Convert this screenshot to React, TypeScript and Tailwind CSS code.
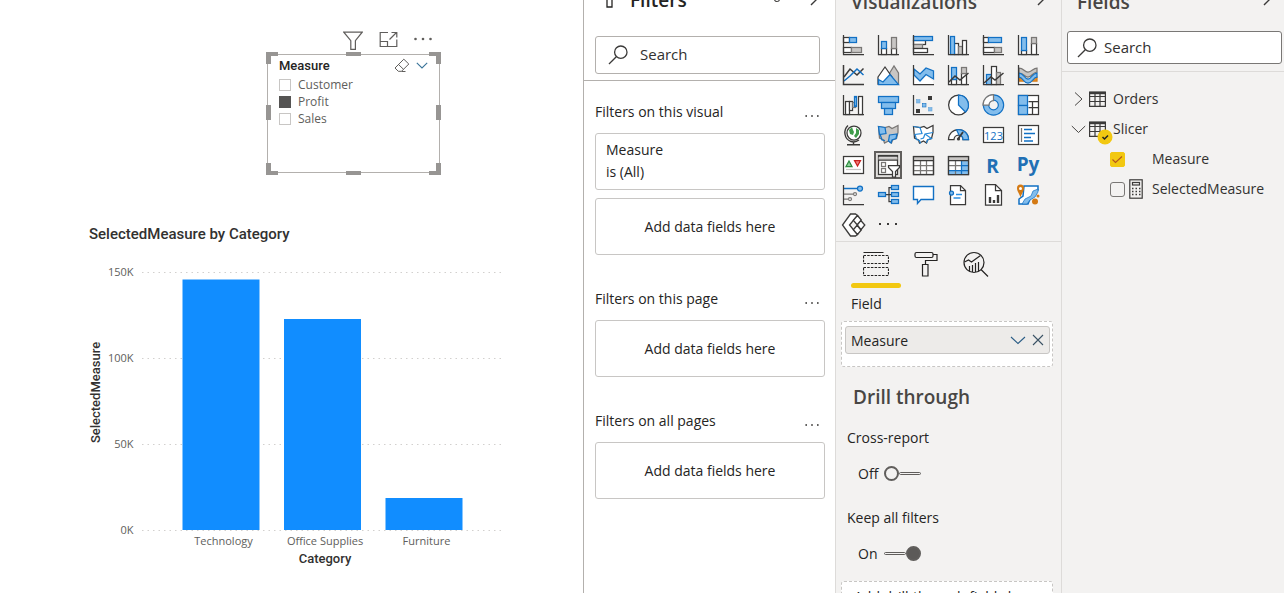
import type { ReactNode } from "react";

const INK = "#3b3a39";
const BLUE = "#1170c4";
const SKY = "#83bdec";
const GREY = "#c8c6c4";
const MID = "#797775";

/* ---------- shared glyphs ---------- */

function SearchGlyph() {
  return (
    <svg viewBox="0 0 20 20" className="h-5 w-5 shrink-0" fill="none" stroke="#3b3a39" strokeWidth="1.3">
      <circle cx="12.8" cy="7.2" r="6.2" />
      <path d="M8.3 11.7 1 19" />
    </svg>
  );
}

function PaneChevron() {
  return (
    <svg viewBox="0 0 9 16" className="h-4 w-[9px]" fill="none" stroke="#3b3a39" strokeWidth="1.4">
      <path d="m1 1 7 7-7 7" />
    </svg>
  );
}

function Dots({ className }: { className: string }) {
  return (
    <svg viewBox="0 0 14 4" className={className} fill="#3b3a39">
      <rect x="0.4" y="1.2" width="1.6" height="1.6" />
      <rect x="6.2" y="1.2" width="1.6" height="1.6" />
      <rect x="12" y="1.2" width="1.6" height="1.6" />
    </svg>
  );
}

function SearchBox({ id, className }: { id: string; className: string }) {
  return (
    <label htmlFor={id} className={className}>
      <SearchGlyph />
      <input
        id={id}
        type="text"
        placeholder="Search"
        className="w-full min-w-0 bg-transparent text-[15px] text-[#252423] outline-none placeholder:text-[#323130] placeholder:opacity-100"
      />
    </label>
  );
}

/* ---------- report canvas ---------- */

const handles = [
  "left-0 top-0 h-3 w-3 border-l-[5px] border-t-[4px]",
  "right-0 top-0 h-3 w-3 border-r-[5px] border-t-[4px]",
  "left-0 bottom-0 h-3 w-3 border-l-[5px] border-b-[4px]",
  "right-0 bottom-0 h-3 w-3 border-r-[5px] border-b-[4px]",
  "left-20 top-0 h-1 w-[15px] border-t-[4px]",
  "left-20 bottom-0 h-1 w-[15px] border-t-[4px]",
  "left-0 top-[53px] h-[15px] w-[5px] border-l-[5px]",
  "right-0 top-[53px] h-[15px] w-[5px] border-l-[5px]",
];

function Slicer() {
  const items = [
    { name: "Customer", on: false },
    { name: "Profit", on: true },
    { name: "Sales", on: false },
  ];
  return (
    <section className="ml-[266px] w-[175px] pt-[31px]">
      <div className="flex h-[21px] items-start justify-end gap-4 pr-[9px]">
        <button type="button" aria-label="Filters">
          <svg viewBox="0 0 20 19" className="h-[19px] w-5" fill="none" stroke="#605e5c" strokeWidth="1.2">
            <path d="M.8 1.2h18.4L12.4 9.600V18.300H7.800V9.600z" />
          </svg>
        </button>
        <button type="button" aria-label="Focus mode">
          <svg viewBox="0 0 19 17" className="h-[17px] w-[19px]" fill="none" stroke="#605e5c" strokeWidth="1.2">
            <path d="M9 1.500H1.200v14h16.600V8.500M1.200 10.500h7.300v5M10.500 8.500l7-7M12.500 1.500h5.300v5" />
          </svg>
        </button>
        <button type="button" aria-label="More options" className="pt-[6px]">
          <svg viewBox="0 0 18 4" className="h-1 w-[18px]" fill="#605e5c">
            <circle cx="1.500" cy="2" r="1.300" />
            <circle cx="9" cy="2" r="1.300" />
            <circle cx="16.500" cy="2" r="1.300" />
          </svg>
        </button>
      </div>
      <div className="relative h-[123px] px-px py-[2px]">
        <div className="h-full border border-[#b3b0ad] px-[11px] pt-px">
          <div className="mb-px flex h-[19px] items-center justify-between">
            <h2 className="font-[Roboto] text-[13px] font-medium text-[#252423]">Measure</h2>
            <div className="flex items-center gap-[6px]">
              <button type="button" aria-label="Clear selections">
                <svg viewBox="0 0 16 15" className="h-[15px] w-4" fill="none" stroke="#605e5c">
                  <path d="M9.800 1.200 14.800 6l-7.300 7.300H4.300L1 10zM4.500 6.500l5 4.800M7.500 13.500h4" />
                </svg>
              </button>
              <button type="button" aria-label="Collapse">
                <svg viewBox="0 0 12 7" className="h-[7px] w-3" fill="none" stroke="#3a7499" strokeWidth="1.100">
                  <path d="m.8.8 5.200 5.200L11.200.8" />
                </svg>
              </button>
            </div>
          </div>
          <ul>
            {items.map((it) => (
              <li key={it.name}>
                <label className="flex h-[17px] items-center gap-[7px] text-[12px] text-[#605e5c]">
                  <input
                    type="checkbox"
                    defaultChecked={it.on}
                    className="h-3 w-3 shrink-0 appearance-none border border-[#c8c6c4] bg-white checked:border-[#555453] checked:bg-[#555453]"
                  />
                  {it.name}
                </label>
              </li>
            ))}
          </ul>
        </div>
        {handles.map((h) => (
          <span key={h} className={`absolute border-[#979593] ${h}`} />
        ))}
      </div>
    </section>
  );
}

function Chart() {
  const ticks = [
    { y: 272, label: "150K" },
    { y: 358, label: "100K" },
    { y: 444, label: "50K" },
    { y: 530, label: "0K" },
  ];
  const bars = [
    { x: 182.5, top: 279.5, name: "Technology" },
    { x: 284, top: 319, name: "Office Supplies" },
    { x: 385.5, top: 498, name: "Furniture" },
  ];
  return (
    <section className="ml-[89px] mt-[49px]">
      <h2 className="font-[Roboto] text-[15px] font-medium leading-5 text-[#323130]">SelectedMeasure by Category</h2>
      <svg viewBox="89 244 426 326" className="h-[326px] w-[426px]">
        {ticks.map((t) => (
          <g key={t.label}>
            <path d={`M142 ${t.y + 0.5}H505`} stroke="#d2d0ce" strokeDasharray="1.500 4" fill="none" />
            <text x="133.500" y={t.y + 4} textAnchor="end" fontSize="11" fill="#605e5c" className="font-['Open_Sans']">
              {t.label}
            </text>
          </g>
        ))}
        {bars.map((b) => (
          <g key={b.name}>
            <rect x={b.x} y={b.top} width="77" height={530 - b.top} fill="#118dff" />
            <text x={b.x + 41} y="545" textAnchor="middle" fontSize="11" fill="#605e5c" className="font-['Open_Sans']">
              {b.name}
            </text>
          </g>
        ))}
        <text x="325" y="563" textAnchor="middle" fontSize="13" fontWeight="500" fill="#323130" className="font-[Roboto]">
          Category
        </text>
        <text transform="translate(100 392.500) rotate(-90)" textAnchor="middle" fontSize="13" fontWeight="500" fill="#323130" className="font-[Roboto]">
          SelectedMeasure
        </text>
      </svg>
    </section>
  );
}

/* ---------- filters pane ---------- */

function FilterGroup({ title, children }: { title: string; children: ReactNode }) {
  return (
    <section className="mb-8">
      <div className="mb-[11px] flex h-[22px] items-center justify-between pr-[6px]">
        <h3>{title}</h3>
        <button type="button" aria-label="More options" className="pt-[9px]">
          <Dots className="h-1 w-[14px]" />
        </button>
      </div>
      <div className="flex flex-col gap-2">{children}</div>
    </section>
  );
}

function DropCard() {
  return (
    <div className="flex h-[57px] items-center justify-center rounded-[3px] border border-[#c8c6c4] bg-white">
      Add data fields here
    </div>
  );
}

function FiltersPane() {
  return (
    <aside className="w-[252px] shrink-0 border-l border-[#b3b0ad] bg-white text-[14px] text-[#252423]">
      <header className="-mt-4 flex h-8 items-center pl-[22px] pr-4">
        <svg viewBox="0 0 8 20" className="mr-4 h-5 w-2" fill="none" stroke="#252423" strokeWidth="1.300">
          <path d="M1 0v17h5V0" />
        </svg>
        <h2 className="grow text-[19px] font-semibold leading-8">Filters</h2>
        <svg viewBox="0 0 20 12" className="mr-[23px] h-3 w-5" fill="none" stroke="#484644" strokeWidth="1.200">
          <path d="M1 4q9-6 18 0" />
          <circle cx="10" cy="5" r="2.500" />
        </svg>
        <span className="self-start pt-[6px]">
          <PaneChevron />
        </span>
      </header>
      <div className="border-b border-[#b3b0ad] pb-[6px] pl-[11px] pr-[15px] pt-5">
        <SearchBox
          id="filter-search"
          className="flex h-[38px] items-center gap-3 rounded-[3px] border border-[#b3b0ad] pb-px pl-3"
        />
      </div>
      <div className="pl-[11px] pr-[10px] pt-[19px]">
        <FilterGroup title="Filters on this visual">
          <div className="h-[57px] rounded-[3px] border border-[#c8c6c4] px-[10px] py-[5px] leading-[22px]">
            <p>Measure</p>
            <p>is (All)</p>
          </div>
          <DropCard />
        </FilterGroup>
        <FilterGroup title="Filters on this page">
          <DropCard />
        </FilterGroup>
        <FilterGroup title="Filters on all pages">
          <DropCard />
        </FilterGroup>
      </div>
    </aside>
  );
}

/* ---------- visualizations pane ---------- */

function Axis() {
  return <path d="M1.500 1v19.500H22" stroke={INK} fill="none" />;
}

type BoxProps = { x: number; y: number; w: number; h: number; f?: string; s?: string };

function Box({ x, y, w, h, f = "#fff", s = INK }: BoxProps) {
  return <rect x={x} y={y} width={w} height={h} fill={f} stroke={s} />;
}

const visuals: { name: string; art: ReactNode }[] = [
  {
    name: "Stacked bar chart",
    art: (
      <>
        <Box x={1.5} y={3.5} w={6} h={5} />
        <Box x={7.5} y={3.5} w={7} h={5} f={SKY} s={BLUE} />
        <Box x={1.5} y={13.5} w={8} h={5} />
        <Box x={9.5} y={13.5} w={10} h={5} f={GREY} s={MID} />
        <Axis />
      </>
    ),
  },
  {
    name: "Stacked column chart",
    art: (
      <>
        <Box x={4.5} y={14.5} w={5} h={6} />
        <Box x={4.5} y={7.5} w={5} h={7} f={SKY} s={BLUE} />
        <Box x={14.5} y={14.5} w={5} h={6} />
        <Box x={14.5} y={3.5} w={5} h={11} f={GREY} s={MID} />
        <Axis />
      </>
    ),
  },
  {
    name: "Clustered bar chart",
    art: (
      <>
        <Box x={1.5} y={6.5} w={12} h={4} />
        <Box x={1.5} y={10.5} w={9} h={4} f={GREY} s={MID} />
        <Box x={1.5} y={14.5} w={14} h={4} />
        <Box x={1.5} y={2.5} w={19} h={4} f={SKY} s={BLUE} />
        <Axis />
      </>
    ),
  },
  {
    name: "Clustered column chart",
    art: (
      <>
        <Box x={7.5} y={9.5} w={4} h={11} />
        <Box x={11.5} y={12.5} w={4} h={8} f={GREY} s={MID} />
        <Box x={15.5} y={6.5} w={4} h={14} />
        <Box x={3.5} y={2.5} w={4} h={18} f={SKY} s={BLUE} />
        <Axis />
      </>
    ),
  },
  {
    name: "100% stacked bar chart",
    art: (
      <>
        <Box x={1.5} y={3.5} w={5} h={5} />
        <Box x={6.5} y={3.5} w={13} h={5} f={SKY} s={BLUE} />
        <Box x={1.5} y={13.5} w={11} h={5} />
        <Box x={12.5} y={13.5} w={7} h={5} f={GREY} s={MID} />
        <Axis />
      </>
    ),
  },
  {
    name: "100% stacked column chart",
    art: (
      <>
        <Box x={4.5} y={16.5} w={5} h={4} />
        <Box x={4.5} y={3.5} w={5} h={13} f={SKY} s={BLUE} />
        <Box x={14.5} y={9.5} w={5} h={11} />
        <Box x={14.5} y={3.5} w={5} h={6} f={GREY} s={MID} />
        <Axis />
      </>
    ),
  },
  {
    name: "Line chart",
    art: (
      <g fill="none" strokeWidth="1.500">
        <path d="M2 13 8 5l7 6 6.500-6.500" stroke={INK} />
        <path d="m2 17 6-5 7-7 6.500 6" stroke={BLUE} />
        <Axis />
      </g>
    ),
  },
  {
    name: "Area chart",
    art: (
      <>
        <path d="m12 10 5-8 4.500 7v11H16z" fill={GREY} stroke={MID} />
        <path d="m1 13 7-10 7 10-4 7H1z" fill="#fff" stroke={INK} />
        <path d="M1.500 15.500 6 18l7-7.500 8.500 10h-20z" fill={SKY} stroke={BLUE} />
      </>
    ),
  },
  {
    name: "Stacked area chart",
    art: (
      <>
        <path d="m2 13 6 4 6-5 7 5v3H2z" fill="#fff" />
        <path d="m2 5 6 5 6-6 7.500 3v8L14 10.500 8 17l-6-6z" fill={SKY} stroke={BLUE} />
        <Axis />
      </>
    ),
  },
  {
    name: "Line and stacked column chart",
    art: (
      <>
        <Box x={4.5} y={15.5} w={5} h={5} />
        <Box x={4.5} y={3.5} w={5} h={12} f={SKY} s={BLUE} />
        <Box x={14.5} y={9.5} w={5} h={11} />
        <Box x={14.5} y={3.5} w={5} h={6} f={GREY} s={MID} />
        <path d="m2 18 6-6 5 4 8.500-7" stroke={INK} fill="none" strokeWidth="1.500" />
        <Axis />
      </>
    ),
  },
  {
    name: "Line and clustered column chart",
    art: (
      <>
        <Box x={4.5} y={10.5} w={5} h={10} f={SKY} s={BLUE} />
        <Box x={9.5} y={2.5} w={5} h={18} />
        <Box x={14.5} y={8.5} w={4} h={12} f={GREY} s={MID} />
        <path d="m2 19 7-6 4 3 8.500-7" stroke={INK} fill="none" strokeWidth="1.500" />
        <Axis />
      </>
    ),
  },
  {
    name: "Ribbon chart",
    art: (
      <>
        <path d="M2 14h6l4 2 3-3h5v4H2z" fill="#e88f2a" stroke="#d47a14" />
        <path d="M2 4c5 0 5 4 9 4s5-4 9-4v4c-4 0-5 5-9 5s-4-4-9-4z" fill={GREY} stroke={MID} />
        <path d="M2 9c5 0 5 6 9 6s4-6 9-6v4c-4 0-4 6-9 6s-5-6-9-6z" fill={SKY} stroke={BLUE} />
        <Axis />
      </>
    ),
  },
  {
    name: "Waterfall chart",
    art: (
      <>
        <Box x={3.5} y={7.5} w={4} h={13} />
        <Box x={7.5} y={7.5} w={3} h={9} />
        <Box x={10.5} y={8.5} w={3} h={5} f={GREY} s={MID} />
        <Box x={12.5} y={2.5} w={2} h={10} f={SKY} s={BLUE} />
        <Box x={16.5} y={2.5} w={4} h={18} />
        <Axis />
      </>
    ),
  },
  {
    name: "Funnel",
    art: (
      <g fill={SKY} stroke={BLUE}>
        <rect x="1.500" y="2.500" width="20" height="6" />
        <rect x="4.500" y="8.500" width="14" height="6" />
        <rect x="7.500" y="14.500" width="8" height="6" />
      </g>
    ),
  },
  {
    name: "Scatter chart",
    art: (
      <>
        <g fill={INK}>
          <rect x="16" y="2" width="4" height="4" />
          <rect x="4" y="15" width="4" height="4" />
        </g>
        <g fill={SKY} stroke="#6ba6d8" strokeWidth=".6">
          <rect x="4.500" y="5.500" width="3.500" height="3.500" />
          <rect x="10.500" y="9.500" width="3.500" height="3.500" stroke={BLUE} />
          <rect x="16.500" y="13.500" width="3.500" height="3.500" />
        </g>
        <Axis />
      </>
    ),
  },
  {
    name: "Pie chart",
    art: (
      <>
        <circle cx="11.500" cy="11" r="9.900" fill="#fff" stroke={INK} />
        <path d="M11.500 1.100a9.900 9.900 0 0 1 7 16.900l-7-7z" fill={SKY} stroke={BLUE} />
      </>
    ),
  },
  {
    name: "Donut chart",
    art: (
      <>
        <circle cx="11.500" cy="11" r="7.500" fill="none" stroke={BLUE} strokeWidth="6.500" />
        <circle cx="11.500" cy="11" r="7.500" fill="none" stroke={SKY} strokeWidth="4.200" />
        <path d="M11.500.5A10.500 10.500 0 0 0 1 11h6a4.500 4.500 0 0 1 4.500-4.500z" fill="#fff" stroke={MID} />
      </>
    ),
  },
  {
    name: "Treemap",
    art: (
      <>
        <Box x={1.5} y={1.5} w={20} h={19} />
        <path d="M11.500 7.500h10M15.500 7.500v13M11.500 13.500h4M15.500 13.500h6" stroke={INK} fill="none" />
        <Box x={1.5} y={1.5} w={9} h={10} f={SKY} s={BLUE} />
        <Box x={1.5} y={11.5} w={9} h={9} f={SKY} s={BLUE} />
      </>
    ),
  },
  {
    name: "Map",
    art: (
      <>
        <circle cx="12" cy="9" r="7" fill="#fff" stroke={INK} />
        <path d="M10 3 7 6l1 4 3 1 1-3-1-2zM14 4l3 2v4l-3 4-2-2 2-3z" fill="#3f9c4a" />
        <path d="M6 1.500C1 6 2 15 9 17.500c3 1 6 0 8-1.500M11.500 18v2.500M5 20.800h13" stroke={INK} fill="none" strokeWidth="1.400" />
      </>
    ),
  },
  {
    name: "Filled map",
    art: (
      <>
        <path d="M1.500 2.500 8 3.500l4-1 3 2 6-3v7l-1.500 6-4 1.500-1 3-3-2-4 2-1-3-4-2z" fill={GREY} stroke={MID} />
        <path d="M1.500 2.500 8 3.500l1 6-6.500 1zM12.500 11l7.500-1-1 4.500-4 1.500-1 3-2.500-2z" fill={SKY} stroke={BLUE} />
        <path d="m3 10 2 6 3 .500" stroke={BLUE} fill="none" />
      </>
    ),
  },
  {
    name: "Shape map",
    art: (
      <>
        <path d="M1.500 2.500 8 3.500l4-1 3 2 6-3v7l-1.500 6-4 1.500-1 3-3-2-4 2-1-3-4-2z" fill="#fff" stroke={INK} />
        <path d="M1.500 2.500 8 3.500l2 6-7 1 1.500 5 3 1 1 3M21 8.500l-8 1.500-1.500 4-3 1M13 10l6.500 4.500-4 1.500-1 3" fill="none" stroke="#2488d8" strokeWidth="1.200" />
      </>
    ),
  },
  {
    name: "Gauge",
    art: (
      <>
        <path d="M1.500 15.500a10 10 0 0 1 20 0h-5.500a4.500 4.500 0 0 0-9 0z" fill="#fff" stroke={INK} />
        <path d="M9.500 5.800a10 10 0 0 1 12 9.700H16a4.500 4.500 0 0 0-4-4.500z" fill={SKY} stroke={BLUE} />
        <path d="m11 15 5-7" stroke={INK} strokeWidth="1.800" />
        <circle cx="11.500" cy="15" r="1.600" fill={INK} />
      </>
    ),
  },
  {
    name: "Card",
    art: (
      <>
        <Box x={1.5} y={3.5} w={20} h={15} />
        <text x="11.500" y="15.500" textAnchor="middle" fontSize="11" strokeWidth="0" fill={BLUE} className="font-['Open_Sans']">
          123
        </text>
      </>
    ),
  },
  {
    name: "Multi-row card",
    art: (
      <>
        <Box x={1.5} y={1.5} w={20} h={19} />
        <path d="M4.500 4v14" stroke={MID} />
        <path d="M7 5.500h8M7 9.500h11M7 13.500h7M7 17h9" stroke={BLUE} strokeWidth="1.600" />
      </>
    ),
  },
  {
    name: "KPI",
    art: (
      <>
        <Box x={1.5} y={2.5} w={20} h={17} />
        <path d="M4 12.500h6L7 7z" fill="#8ed29b" stroke="#2d8a3e" />
        <path d="M12.500 6.500h6l-3 5.500z" fill="#f2827f" stroke="#c9211e" />
        <path d="M4 15.500h15" stroke={GREY} />
      </>
    ),
  },
  {
    name: "Slicer",
    art: (
      <>
        <Box x={1.5} y={1.5} w={19} h={19} />
        <path d="M1.500 4.500h19" stroke={GREY} strokeWidth="2.500" />
        <path d="M1.500 2h19M1.500 6h19" stroke={INK} />
        <g fill="#fff" stroke={MID}>
          <rect x="4.500" y="8.500" width="4" height="4" />
          <rect x="4.500" y="14.500" width="4" height="4" />
        </g>
        <path d="M11.500 11.500h11v2l-4 4v5.500h-3v-5.500l-4-4z" fill="#fff" stroke={INK} />
      </>
    ),
  },
  {
    name: "Table",
    art: (
      <>
        <Box x={1.5} y={2.5} w={20} h={18} />
        <path d="M1.500 4.500h20" stroke={GREY} strokeWidth="3" />
        <path d="M1.500 11.500h20M1.500 16.500h20M8.500 6.500v14M14.500 6.500v14" stroke={MID} />
        <path d="M1.500 2.500h20v18h-20zM1.500 6.500h20" stroke={INK} fill="none" />
      </>
    ),
  },
  {
    name: "Matrix",
    art: (
      <>
        <Box x={1.5} y={2.5} w={20} h={18} />
        <path d="M14.500 6.500h7v14h-20v-4h13z" fill={SKY} />
        <path d="M1.500 4.500h20" stroke={GREY} strokeWidth="3" />
        <path d="M8.500 6.500v14M1.500 11.500h13" stroke={MID} />
        <path d="M14.500 6.500v14M14.500 11.500h7M1.500 16.500h20" stroke={BLUE} fill="none" />
        <path d="M1.500 2.500h20v18h-20zM1.500 6.500h20" stroke={INK} fill="none" />
      </>
    ),
  },
  {
    name: "R script visual",
    art: (
      <text x="10.500" y="19" textAnchor="middle" fontSize="19" fontWeight="700" fill="#2170b5" className="font-['Open_Sans']">
        R
      </text>
    ),
  },
  {
    name: "Python visual",
    art: (
      <text x="11" y="17" textAnchor="middle" fontSize="19" fontWeight="700" fill="#2170b5" className="font-['Open_Sans']">
        Py
      </text>
    ),
  },
  {
    name: "Key influencers",
    art: (
      <>
        <path d="M2 4.500h13" stroke={BLUE} strokeWidth="1.500" />
        <circle cx="18" cy="4.500" r="2.500" fill={SKY} stroke={BLUE} />
        <path d="M2 10h9M2 15h4" stroke={MID} />
        <circle cx="13" cy="10" r="1.500" fill="#fff" stroke={MID} />
        <circle cx="8" cy="15" r="1.500" fill="#fff" stroke={MID} />
        <Axis />
      </>
    ),
  },
  {
    name: "Decomposition tree",
    art: (
      <>
        <path d="M9 10.500h5M14 3.500h-2v14h2" stroke={INK} fill="none" />
        <g fill={SKY} stroke={BLUE}>
          <rect x="1.500" y="8.500" width="7" height="4" />
          <rect x="14.500" y="1.500" width="7" height="4" />
          <rect x="14.500" y="8.500" width="7" height="4" />
          <rect x="14.500" y="15.500" width="7" height="4" />
        </g>
      </>
    ),
  },
  {
    name: "Q&A",
    art: <path d="M1.500 2.500h20v13H9l-3.500 4v-4h-4z" fill="#fff" stroke={BLUE} strokeWidth="1.400" />,
  },
  {
    name: "Smart narrative",
    art: (
      <>
        <path d="M3.500 1.500h10l5 5v14h-15z" fill="#fff" stroke={INK} />
        <path d="M13.500 1.500v5h5" fill="none" stroke={INK} />
        <circle cx="4.500" cy="9" r="2" fill={SKY} stroke={BLUE} />
        <path d="M9 10.500h6M6.500 14h7" stroke="#2e8fe0" strokeWidth="1.300" />
      </>
    ),
  },
  {
    name: "Paginated report",
    art: (
      <>
        <path d="M3.500.5h10l6 6v14.500h-16z" fill="#fff" stroke={INK} />
        <path d="M13.500.5v6h6" fill="none" stroke={INK} />
        <path d="M8 19v-6M12 19v-3M16 19v-8" stroke={INK} strokeWidth="2.400" />
      </>
    ),
  },
  {
    name: "ArcGIS map",
    art: (
      <>
        <path d="M7 2h14v4l-3 2-1 4-4 3-2 5H2v-5l4-3z" fill="#fff" stroke={BLUE} strokeWidth="1.500" />
        <path d="m21 5-5 2-2 5-6 3-3 5h5l3-4 5-3 3-5z" fill={SKY} stroke={BLUE} strokeWidth=".7" />
        <path d="M0 4a3.500 3.500 0 0 1 7 0c0 3.500-2 4.500-3.500 9.500C2 8.500 0 7.500 0 4z" fill="#d47a14" />
        <circle cx="3.500" cy="4.500" r="1.500" fill="#fff" />
        <circle cx="18" cy="17.500" r="3" fill="#d47a14" />
        <circle cx="21" cy="12" r="1.500" fill="#d47a14" />
      </>
    ),
  },
  {
    name: "Power Apps",
    art: (
      <g fill="#fff" stroke={INK} strokeWidth="1.300">
        <path d="M8.500 0h5l2 1.500L7.500 11l8 9.500-2 1.500h-5L.500 11z" />
        <path d="m15.500 1.500 3.800 4.500-4 5-4-4.800zM18.800 6.500l4 4.500-4 5-3.900-5zM15.300 11l4 5-3.800 4.500-4.200-4.700z" />
      </g>
    ),
  },
  {
    name: "Get more visuals",
    art: (
      <g fill={INK}>
        <rect x="2" y="9" width="2" height="2" />
        <rect x="10" y="9" width="2" height="2" />
        <rect x="18" y="9" width="2" height="2" />
      </g>
    ),
  },
];

function Switch({ label, on }: { label: string; on: boolean }) {
  return (
    <label className="flex h-[22px] items-center gap-[6px] pl-[17px]">
      <span className="w-5">{label}</span>
      <input
        type="checkbox"
        role="switch"
        defaultChecked={on}
        className="flex h-[15px] w-[37px] appearance-none items-center before:h-[15px] before:w-[15px] before:shrink-0 before:rounded-full before:border-2 before:border-[#605e5c] after:h-[3px] after:grow after:rounded-sm after:border after:border-[#605e5c] checked:flex-row-reverse checked:before:bg-[#5c5a58]"
      />
    </label>
  );
}

function VisualizationsPane() {
  return (
    <aside className="w-[226px] shrink-0 border-l border-[#dddbd9] bg-[#f3f2f1] text-[14px] text-[#252423]">
      <header className="-mt-3 flex h-7 items-start justify-between pl-[15px] pr-[15px]">
        <h2 className="text-[19px] font-semibold leading-7 text-[#484644]">Visualizations</h2>
        <span className="pt-[2px]">
          <PaneChevron />
        </span>
      </header>
      <div className="mt-[14px] grid w-[210px] grid-cols-6">
        {visuals.map((v) => (
          <button key={v.name} type="button" aria-label={v.name} className="flex h-[30px] items-center pl-[3px]">
            <span
              className={
                v.name === "Slicer" ? "border-2 border-[#605e5c] bg-[#e1dfdd] p-px" : "border-2 border-transparent p-px"
              }
            >
              <svg viewBox="0 0 22 22" className="h-[22px] w-[22px] overflow-visible" strokeWidth="1.250">
                {v.art}
              </svg>
            </span>
          </button>
        ))}
      </div>
      <div className="mt-px flex border-t border-[#dddbd9] pl-[15px]">
        <button type="button" aria-label="Fields" className="flex h-[46px] w-[50px] flex-col items-center justify-between pt-[9px]">
          <svg viewBox="0 0 26 26" className="h-[26px] w-[26px]" fill="none" stroke="#252423">
            <path d="M.5 1.500h20" />
            <path d="M.5 4.500h25v8h-25zM.5 16.500h25v8h-25z" strokeDasharray="2.500 1.200" strokeWidth="1.200" />
          </svg>
          <span className="h-[5px] w-full rounded-full bg-[#f2c811]" />
        </button>
        <button type="button" aria-label="Format" className="flex h-[46px] w-[50px] items-start justify-center pt-[9px]">
          <svg viewBox="0 0 24 26" className="h-[26px] w-6" fill="none" stroke="#252423" strokeWidth="1.200">
            <rect x="1" y="1.500" width="18" height="5" rx="1.500" />
            <path d="M19 3.500h4v6H11.500v4M8.500 13.500h5.500v11.500H8.500z" />
          </svg>
        </button>
        <button type="button" aria-label="Analytics" className="flex h-[46px] w-[50px] items-start justify-center pt-[9px]">
          <svg viewBox="0 0 26 26" className="h-[26px] w-[26px]" fill="none" stroke="#252423" strokeWidth="1.200">
            <circle cx="11" cy="11.500" r="10" />
            <path d="m18 18.500 7 7M1.500 11l4-2 3 2 9-6.500M6.500 20v-5M9.500 21v-7M12.500 21v-9M15.500 20v-9" />
          </svg>
        </button>
      </div>
      <h3 className="mt-[5px] pl-[15px] leading-[22px]">Field</h3>
      <div className="ml-[5px] mr-2 mt-[6px] h-[46px] rounded-[3px] border border-dashed border-[#c8c6c4] bg-white pl-[3px] pr-[2px] pt-1">
        <div className="flex h-7 items-center rounded-[3px] border border-[#c8c6c4] bg-[#edebe9] px-[5px]">
          <span className="grow">Measure</span>
          <button type="button" aria-label="Field options" className="mr-[6px]">
            <svg viewBox="0 0 16 9" className="h-[9px] w-4" fill="none" stroke="#2b5d86" strokeWidth="1.100">
              <path d="m1 1 7 6.500L15 1" />
            </svg>
          </button>
          <button type="button" aria-label="Remove field">
            <svg viewBox="0 0 12 12" className="h-3 w-3" fill="none" stroke="#3b5264" strokeWidth="1.100">
              <path d="m1 1 10 10M11 1 1 11" />
            </svg>
          </button>
        </div>
      </div>
      <h2 className="mt-4 pl-[17px] text-[19px] font-semibold leading-7 text-[#484644]">Drill through</h2>
      <div className="pl-[5px]">
        <h3 className="mt-4 pl-[6px] leading-[22px]">Cross-report</h3>
        <div className="mt-[13px]">
          <Switch label="Off" on={false} />
        </div>
        <h3 className="mt-[23px] pl-[6px] leading-[22px]">Keep all filters</h3>
        <div className="mt-[13px]">
          <Switch label="On" on />
        </div>
      </div>
      <div className="ml-[5px] mr-2 mt-[17px] h-[46px] rounded-[3px] border border-dashed border-[#c8c6c4] bg-white px-3 pt-1 leading-[22px]">
        Add drill-through fields here
      </div>
    </aside>
  );
}

/* ---------- fields pane ---------- */

function TableGlyph() {
  return (
    <svg viewBox="0 0 17 16" className="h-4 w-[17px] shrink-0" fill="none" stroke="#3b3a39" strokeWidth="1.200">
      <path d="M.600 1h15.800v14.400H.600zM.600 5.500h15.800M.600 10.500h15.800M6 3v12.400M11 3v12.400" />
      <path d="M.600 2h15.800" strokeWidth="2.400" />
    </svg>
  );
}

function FieldsPane() {
  return (
    <aside className="w-[223px] shrink-0 border-l border-[#dddbd9] bg-[#f3f2f1] text-[14px] text-[#323130]">
      <header className="-mt-3 flex h-7 items-start justify-between pl-[15px] pr-3">
        <h2 className="text-[19px] font-semibold leading-7 text-[#484644]">Fields</h2>
        <span className="pt-[2px]">
          <PaneChevron />
        </span>
      </header>
      <div className="border-b border-[#dddbd9] pb-[7px] pl-[5px] pr-[2px] pt-[15px]">
        <SearchBox
          id="field-search"
          className="flex h-[33px] items-center gap-[7px] rounded-[3px] border border-[#797775] bg-white pl-[9px]"
        />
      </div>
      <ul className="pt-3 leading-[30px]">
        <li className="flex h-[30px] items-center pl-3">
          <button type="button" aria-label="Expand Orders" className="mr-[6px]">
            <svg viewBox="0 0 9 16" className="h-4 w-[9px]" fill="none" stroke="#484644">
              <path d="m1 1.500 7 6.500-7 6.500" />
            </svg>
          </button>
          <TableGlyph />
          <span className="pl-[7px]">Orders</span>
        </li>
        <li>
          <div className="flex h-[30px] items-center pl-[9px]">
            <button type="button" aria-label="Collapse Slicer" className="mr-[3px]">
              <svg viewBox="0 0 15 9" className="h-[9px] w-[15px]" fill="none" stroke="#484644">
                <path d="m.800 1 6.700 6.500L14.200 1" />
              </svg>
            </button>
            <span className="relative">
              <TableGlyph />
              <svg viewBox="0 0 16 16" className="absolute left-2 top-2 h-4 w-4">
                <circle cx="8" cy="8" r="7.500" fill="#f2c811" />
                <path d="m5.500 8 2 2 3.500-3.500" fill="none" stroke="#252423" strokeWidth="1.500" />
              </svg>
            </span>
            <span className="pl-[7px]">Slicer</span>
          </div>
          <ul>
            <li>
              <label className="flex h-[30px] items-center pl-12">
                <span className="relative mr-[27px] flex">
                  <input
                    type="checkbox"
                    defaultChecked
                    className="h-[15px] w-[15px] appearance-none rounded-[2px] border border-[#8a8886] checked:border-[#f2c811] checked:bg-[#f2c811]"
                  />
                  <svg viewBox="0 0 15 15" className="pointer-events-none absolute inset-0 h-[15px] w-[15px]" fill="none" stroke="#b3541e" strokeWidth="1.100">
                    <path d="m2.500 7.500 3 3 6.500-6" />
                  </svg>
                </span>
                Measure
              </label>
            </li>
            <li>
              <label className="flex h-[30px] items-center pl-12">
                <input
                  type="checkbox"
                  className="mr-1 h-[15px] w-[15px] appearance-none rounded-[3px] border border-[#797775] bg-[#f3f2f1]"
                />
                <svg viewBox="0 0 14 20" className="mr-[9px] h-5 w-[14px]" fill="none" stroke="#3b3a39" strokeWidth="1.200">
                  <rect x=".800" y=".800" width="12.400" height="18.400" />
                  <rect x="3.500" y="3.500" width="7" height="2.500" />
                  <path d="M3 9.500h9M3 12.500h9M3 15.500h9" strokeDasharray="1.500 2" strokeWidth="1.400" />
                </svg>
                SelectedMeasure
              </label>
            </li>
          </ul>
        </li>
      </ul>
    </aside>
  );
}

export default function App() {
  return (
    <div className="flex h-screen overflow-hidden bg-white font-['Open_Sans','Noto_Sans',sans-serif]">
      <main className="min-w-0 grow">
        <Slicer />
        <Chart />
      </main>
      <FiltersPane />
      <VisualizationsPane />
      <FieldsPane />
    </div>
  );
}
